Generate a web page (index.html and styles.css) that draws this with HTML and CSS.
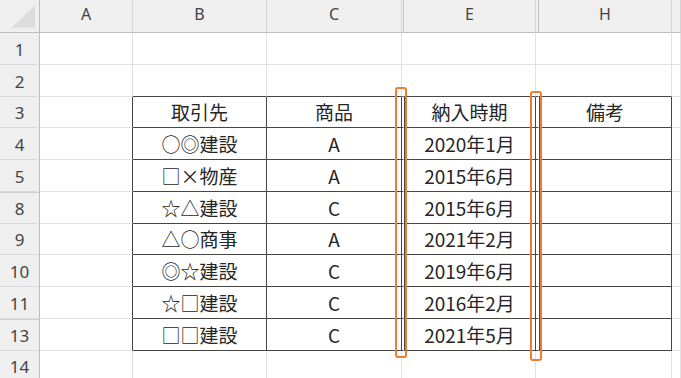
FILE: index.html
```html
<!DOCTYPE html>
<html lang="ja">
<head>
<meta charset="utf-8">
<title>Sheet</title>
<link rel="stylesheet" href="styles.css">
</head>
<body>
<div class="page">
  <div class="sheet">
    <!-- column headers -->
    <div class="c h corner"><svg width="40" height="33" viewBox="0 0 40 33"><polygon points="12,28 36,28 36,5" fill="#dcdcdc"/></svg></div>
    <div class="c h">A</div>
    <div class="c h">B</div>
    <div class="c h">C</div>
    <div class="c h hid"></div>
    <div class="c h">E</div>
    <div class="c h hid"></div>
    <div class="c h">H</div>
    <div class="c h"></div>

    <!-- row 1 -->
    <div class="c r">1</div>
    <div class="c"></div><div class="c"></div><div class="c"></div><div class="c gap"></div><div class="c"></div><div class="c gap"></div><div class="c"></div><div class="c"></div>

    <!-- row 2 -->
    <div class="c r">2</div>
    <div class="c"></div><div class="c tt"></div><div class="c tt"></div><div class="c gap tt"></div><div class="c tt"></div><div class="c gap tt"></div><div class="c tt"></div><div class="c"></div>

    <!-- row 3 -->
    <div class="c r">3</div>
    <div class="c tl"></div><div class="c t">取引先</div><div class="c t">商品</div><div class="c gap t"></div><div class="c t el">納入時期</div><div class="c gap t"></div><div class="c t hl">備考</div><div class="c"></div>

    <!-- row 4 -->
    <div class="c r">4</div>
    <div class="c tl"></div><div class="c t">○◎建設</div><div class="c t">A</div><div class="c gap t"></div><div class="c t el">2020年1月</div><div class="c gap t"></div><div class="c t hl"></div><div class="c"></div>

    <!-- row 5 -->
    <div class="c r">5</div>
    <div class="c tl"></div><div class="c t">□<span class="fw">×</span>物産</div><div class="c t">A</div><div class="c gap t"></div><div class="c t el">2015年6月</div><div class="c gap t"></div><div class="c t hl"></div><div class="c"></div>

    <!-- row 8 -->
    <div class="c r hrow">8</div>
    <div class="c tl"></div><div class="c t">☆△建設</div><div class="c t">C</div><div class="c gap t"></div><div class="c t el">2015年6月</div><div class="c gap t"></div><div class="c t hl"></div><div class="c"></div>

    <!-- row 9 -->
    <div class="c r">9</div>
    <div class="c tl"></div><div class="c t">△○商事</div><div class="c t">A</div><div class="c gap t"></div><div class="c t el">2021年2月</div><div class="c gap t"></div><div class="c t hl"></div><div class="c"></div>

    <!-- row 10 -->
    <div class="c r">10</div>
    <div class="c tl"></div><div class="c t">◎☆建設</div><div class="c t">C</div><div class="c gap t"></div><div class="c t el">2019年6月</div><div class="c gap t"></div><div class="c t hl"></div><div class="c"></div>

    <!-- row 11 -->
    <div class="c r">11</div>
    <div class="c tl"></div><div class="c t">☆□建設</div><div class="c t">C</div><div class="c gap t"></div><div class="c t el">2016年2月</div><div class="c gap t"></div><div class="c t hl"></div><div class="c"></div>

    <!-- row 13 -->
    <div class="c r hrow">13</div>
    <div class="c tl"></div><div class="c t">□□建設</div><div class="c t">C</div><div class="c gap t"></div><div class="c t el">2021年5月</div><div class="c gap t"></div><div class="c t hl"></div><div class="c"></div>

    <!-- row 14 -->
    <div class="c r">14</div>
    <div class="c"></div><div class="c"></div><div class="c"></div><div class="c gap"></div><div class="c"></div><div class="c gap"></div><div class="c"></div><div class="c"></div>
  </div>

  <div class="mark mark-d"></div>
  <div class="mark mark-fg"></div>
</div>
</body>
</html>
```

FILE: styles.css
```css
html, body {
  margin: 0;
  padding: 0;
  background: #ffffff;
}

.page {
  position: relative;
  width: 681px;
  height: 378px;
  overflow: hidden;
}

.sheet {
  display: grid;
  grid-template-columns: 40px 93px 134px 135px 2px 132px 3px 133px 1fr;
  grid-template-rows: 33px repeat(11, 31.75px);
  width: 681px;
}

.c {
  box-sizing: border-box;
  border-right: 1px solid #e1e1e1;
  border-bottom: 1px solid #e1e1e1;
  display: flex;
  align-items: center;
  justify-content: center;
  font-family: "Noto Sans CJK JP", "Noto Sans", sans-serif;
  font-size: 19px;
  line-height: 1;
  color: #262626;
  white-space: nowrap;
  overflow: hidden;
}

.fw {
  font-feature-settings: "fwid";
}

/* column headers */
.h {
  background: #efefef;
  border-right-color: #d4d4d4;
  border-bottom-color: #bdbdbd;
  font-family: "Noto Sans", "DejaVu Sans", sans-serif;
  font-size: 16px;
  color: #444444;
  padding-bottom: 5px;
}

.h.hid {
  border-right-color: #c4c4c4;
  padding: 0;
}

.corner {
  padding: 0;
  border-right-color: #bdbdbd;
}

.corner svg {
  display: block;
}

/* row headers */
.r {
  background: #efefef;
  border-right-color: #bdbdbd;
  border-bottom-color: #d9d9d9;
  font-family: "Noto Sans", "DejaVu Sans", sans-serif;
  font-size: 17px;
  color: #444444;
  padding-top: 2px;
}

.r.hrow {
  box-shadow: inset 0 1px #d0d0d0;
}

/* hidden column gaps */
.gap {
  border-right-color: transparent;
}

/* table */
.tt {
  border-bottom-color: #464646;
}

.tl {
  border-right-color: #464646;
}

.t {
  border-right-color: #464646;
  border-bottom-color: #464646;
}

.gap.t {
  border-right-color: transparent;
}

.el,
.hl {
  box-shadow: inset 1px 0 #464646;
}

/* highlight marks over the hidden columns */
.mark {
  position: absolute;
  box-sizing: border-box;
  width: 12px;
  border: 2px solid #ed7d31;
  border-radius: 3px;
}

.mark-d {
  left: 395px;
  top: 87px;
  height: 271px;
}

.mark-fg {
  left: 530px;
  top: 91px;
  height: 270px;
}
```
